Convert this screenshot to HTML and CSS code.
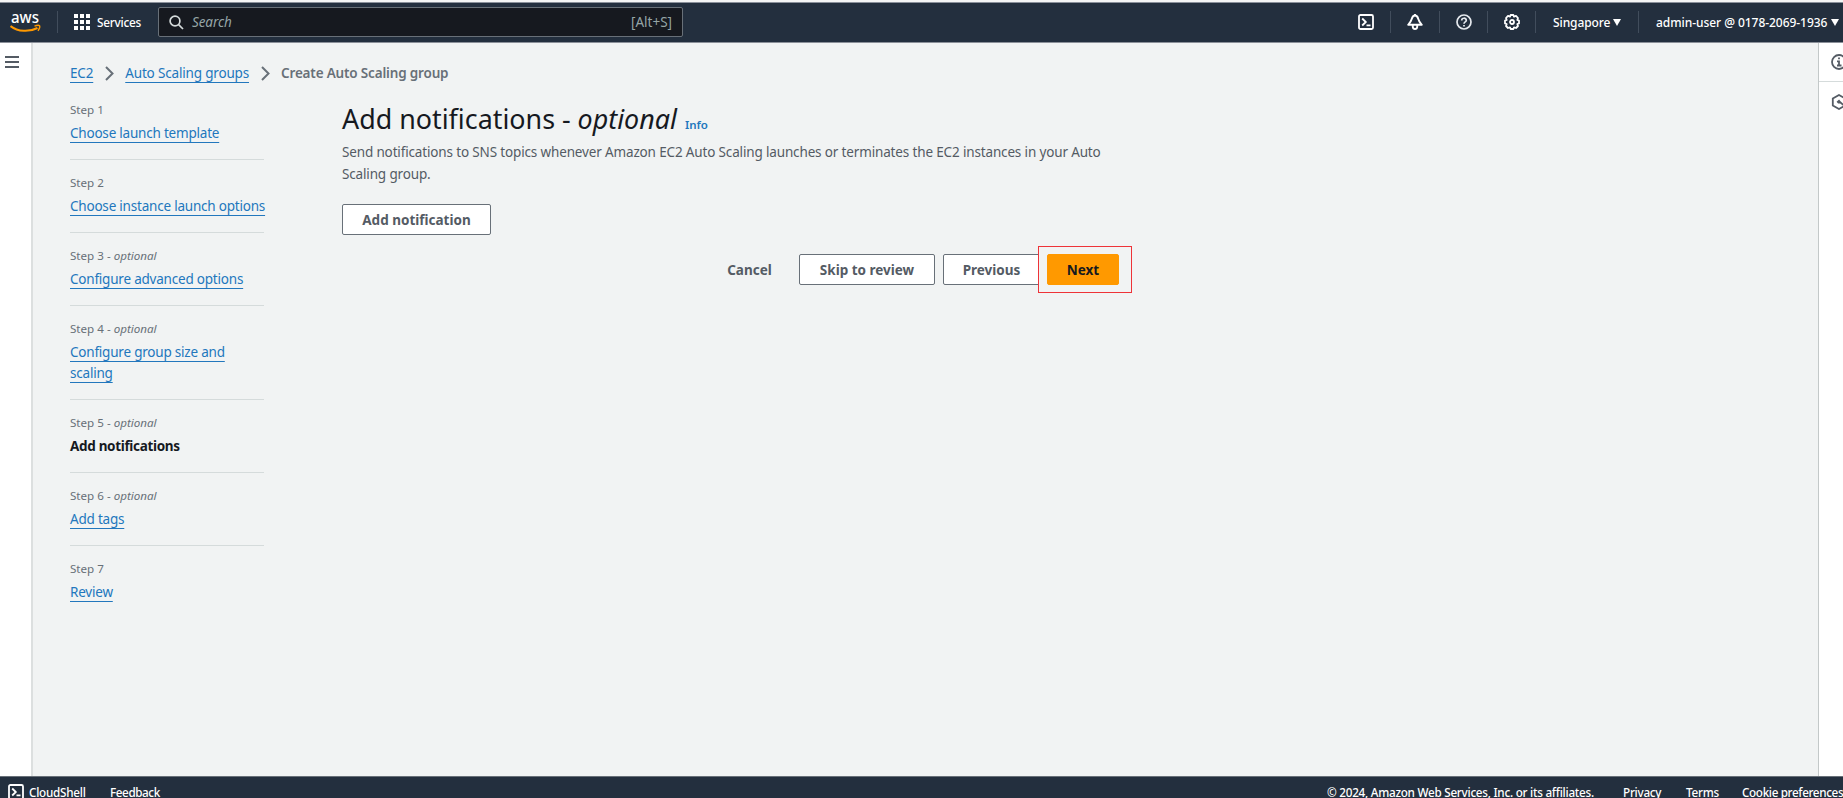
FILE: index.html
```html
<!DOCTYPE html>
<html lang="en">
<head>
<meta charset="utf-8">
<title>Create Auto Scaling group | EC2</title>
<link rel="stylesheet" href="styles.css">
</head>
<body>
<header class="topbar">
  <svg class="logo" width="32" height="32" viewBox="0 -8 32 32" aria-label="aws">
    <text class="logo-text" x="1" y="9" textLength="28" lengthAdjust="spacingAndGlyphs">aws</text>
    <path d="M0.500 12C8 18 19.500 18.200 27.500 14" fill="none" stroke="#f90" stroke-width="2"/>
    <path d="M24.500 12.100C27 11.200 29 11.200 29.600 11.800C30 12.700 29.300 15 28 16.800" fill="none" stroke="#f90" stroke-width="1.400"/>
  </svg>
  <span class="rule rule-logo"></span>
  <div class="services">
    <svg width="16" height="16" viewBox="0 0 16 16" fill="#fff"><path d="M0 0h4v4H0zM6 0h4v4H6zM12 0h4v4h-4zM0 6h4v4H0zM6 6h4v4H6zM12 6h4v4h-4zM0 12h4v4H0zM6 12h4v4H6zM12 12h4v4h-4z"/></svg>
    <span class="t-services">Services</span>
  </div>
  <div class="search">
    <svg width="15" height="15" viewBox="0 0 15 15" fill="none" stroke="#d5dbdb" stroke-width="1.700"><circle cx="6" cy="6" r="4.900"/><path d="M9.600 9.600L14 14"/></svg>
    <span class="search-hint">Search</span>
    <span class="search-key">[Alt+S]</span>
  </div>
  <nav class="tools">
    <span class="tool tool-shell"><svg width="16" height="16" viewBox="0 0 16 16" fill="none" stroke="#fff" stroke-width="1.800"><rect x="1" y="1" width="14" height="14" rx="1.500"/><path d="M4.200 4.500L7.800 8L4.200 11.500M8.500 11.300H12.500"/></svg></span>
    <span class="tool tool-bell"><svg width="16" height="16" viewBox="0 0 16 16" fill="none" stroke="#fff" stroke-width="1.900" stroke-linejoin="round"><path d="M8 1.500C6 1.500 5.200 3 4.700 5C4.100 7.300 3 8.500 1.200 10.800H14.800C13 8.500 11.900 7.300 11.300 5C10.800 3 10 1.500 8 1.500ZM5.800 11V13Q6 15 8 15T10.200 13V11M8 0V2"/></svg></span>
    <span class="tool tool-help"><svg width="16" height="16" viewBox="0 0 16 16" fill="none" stroke="#e5e9ee" stroke-width="1.700"><circle cx="8" cy="8" r="7"/><path d="M5.700 6.500C5.700 3.500 10.300 3.500 10.300 6.300C10.300 8 8 7.700 8 9.800M8 11V12.600"/></svg></span>
    <span class="tool tool-gear"><svg width="16" height="16" viewBox="0 0 16 16" fill="none" stroke="#fff" stroke-width="1.800" stroke-linejoin="round"><path d="M6.600 1H9.400L10 2.600L12 1.900L14 4L13.300 6L15 6.600V9.400L13.300 10L14 12L12 14L10 13.400L9.400 15H6.600L6 13.400L4 14L2 12L2.700 10L1 9.400V6.600L2.700 6L2 4L4 1.900L6 2.600Z"/><circle cx="8" cy="8" r="2"/></svg></span>
    <span class="region"><span class="t-region">Singapore</span><svg width="8" height="7" viewBox="0 0 8 7" fill="#fff"><path d="M0 0H8L4 7Z"/></svg></span>
    <span class="account"><span class="t-account">admin-user @ 0178-2069-1936</span><svg width="8" height="7" viewBox="0 0 8 7" fill="#fff"><path d="M0 0H8L4 7Z"/></svg></span>
  </nav>
</header>

<div class="shell">
  <aside class="left-rail">
    <svg width="14" height="12" viewBox="0 0 14 12" stroke="#545b64" stroke-width="1.800"><path d="M0 1H14M0 6H14M0 11H14"/></svg>
  </aside>
  <main class="page">
    <nav class="crumbs">
      <a class="link c-ec2">EC2</a>
      <svg class="chev" width="9" height="15" viewBox="0 0 9 15" fill="none" stroke="#687078" stroke-width="2"><path d="M1 1L7.500 7.500L1 14"/></svg>
      <a class="link c-asg">Auto Scaling groups</a>
      <svg class="chev" width="9" height="15" viewBox="0 0 9 15" fill="none" stroke="#687078" stroke-width="2"><path d="M1 1L7.500 7.500L1 14"/></svg>
      <span class="c-current">Create Auto Scaling group</span>
    </nav>
    <div class="columns">
      <ol class="steps">
        <li><div class="step-no">Step 1</div><div class="step-name"><a class="link">Choose launch template</a></div></li>
        <li><div class="step-no">Step 2</div><div class="step-name"><a class="link">Choose instance launch options</a></div></li>
        <li><div class="step-no">Step 3 - <i>optional</i></div><div class="step-name"><a class="link">Configure advanced options</a></div></li>
        <li><div class="step-no">Step 4 - <i>optional</i></div><div class="step-name"><a class="link">Configure group size and<br>scaling</a></div></li>
        <li><div class="step-no">Step 5 - <i>optional</i></div><div class="step-name active">Add notifications</div></li>
        <li><div class="step-no">Step 6 - <i>optional</i></div><div class="step-name"><a class="link">Add tags</a></div></li>
        <li><div class="step-no">Step 7</div><div class="step-name"><a class="link">Review</a></div></li>
      </ol>
      <section class="content">
        <div class="heading"><h1>Add notifications - <i>optional</i></h1><a class="info">Info</a></div>
        <p class="desc">Send notifications to SNS topics whenever Amazon EC2 Auto Scaling launches or terminates the EC2 instances in your Auto<br>Scaling group.</p>
        <button class="btn b-add">Add notification</button>
        <div class="actions">
          <button class="btn b-cancel">Cancel</button>
          <button class="btn b-skip">Skip to review</button>
          <button class="btn b-prev">Previous</button>
          <div class="next-wrap"><button class="btn b-next">Next</button></div>
        </div>
      </section>
    </div>
  </main>
  <aside class="right-rail">
    <div class="rail-item"><svg width="16" height="16" viewBox="0 0 16 16" fill="none" stroke="#545b64" stroke-width="1.800"><circle cx="8" cy="8" r="7"/><path d="M8 3.500V5.300M6 7.300H8V11.500M6 11.500H10.500"/></svg></div>
    <div class="rail-item last"><svg width="16" height="16" viewBox="0 0 16 16" fill="none" stroke="#545b64" stroke-width="1.800"><path d="M8 1L14.200 4.500V11.500L8 15L1.800 11.500V4.500Z"/><path d="M6.200 8.500L8 6.800L9.500 8.500L13 11.500M7 8.500H9"/></svg></div>
  </aside>
</div>

<footer class="footer">
  <svg width="16" height="16" viewBox="0 0 16 16" fill="none" stroke="#fff" stroke-width="1.800"><rect x="1" y="1" width="14" height="14" rx="1.500"/><path d="M4.200 4.500L7.800 8L4.200 11.500M8.500 11.300H12.500"/></svg>
  <span class="f-shell">CloudShell</span>
  <span class="f-feedback">Feedback</span>
  <span class="f-copy">© 2024, Amazon Web Services, Inc. or its affiliates.</span>
  <span class="f-privacy">Privacy</span>
  <span class="f-terms">Terms</span>
  <span class="f-cookie">Cookie preferences</span>
</footer>
</body>
</html>
```
FILE: styles.css
```css
* { box-sizing: border-box; }
body {
  margin: 0;
  height: 798px;
  overflow: hidden;
  display: flex;
  flex-direction: column;
  background: #f1f3f3;
  font-family: "Noto Sans", "Open Sans", sans-serif;
  font-size: 13.5px;
  color: #545b64;
  white-space: nowrap;
}
svg { display: block; flex: none; }
span, a { flex: none; }

.topbar {
  height: 43px;
  flex: none;
  display: flex;
  align-items: center;
  border-top: 2px solid #f4f5f5;
  border-bottom: 1px solid #8b9099;
  background: #232f3e;
  box-shadow: inset 0 1px #8b919b;
  color: #fff;
  font-size: 12px;
  font-weight: 500;
}
.logo { margin-left: 10px; }
.logo-text { font-family: "Noto Sans", sans-serif; font-size: 17px; font-weight: 500; fill: #fff; }
.rule { width: 1px; height: 22px; background: #414d5c; }
.rule-logo { margin-left: 15px; }
.services { display: flex; align-items: center; margin-left: 16px; width: 84px; gap: 7px; }
.t-services { font-size: 11.8px; letter-spacing: -0.25px; }
.search {
  display: flex;
  align-items: center;
  width: 525px;
  height: 30px;
  padding: 0 10px;
  border: 1px solid #687078;
  border-radius: 2px;
  background: #16191f;
  color: #95a5a6;
  font-size: 13.5px;
  font-weight: 400;
}
.search-hint { margin-left: 8px; font-style: italic; letter-spacing: -0.1px; }
.search-key { margin-left: auto; }
.tools { display: flex; align-items: center; margin-left: auto; }
.tool { display: flex; align-items: center; height: 22px; border-right: 1px solid #414d5c; }
.tool-shell { width: 33px; }
.tool-bell { width: 49px; padding-left: 16px; }
.tool-help { width: 48px; padding-left: 16px; }
.tool-gear { width: 48px; padding-left: 16px; }
.region { display: flex; align-items: center; gap: 6px; width: 103px; height: 22px; padding-left: 17px; border-right: 1px solid #414d5c; }
.t-region { width: 54px; letter-spacing: -0.1px; }
.account { display: flex; align-items: center; gap: 6px; width: 204px; padding-left: 17px; }
.t-account { width: 169px; letter-spacing: -0.05px; }

.shell { display: flex; flex: 1; min-height: 0; }
.left-rail { width: 33px; padding: 13px 0 0 5px; background: #fff; border-right: 2px solid #dcdfdf; }
.page { flex: 1; min-width: 0; padding: 18px 0 0 37px; }
.right-rail { width: 25px; overflow: hidden; background: #fff; border-left: 1px solid #c3c8c8; }
.rail-item { height: 39px; padding: 11px 0 0 12px; border-bottom: 1px solid #d5dbdb; }
.rail-item.last { border-bottom: 0; padding-top: 12px; }

.link { color: #2277bd; text-decoration: underline; text-decoration-thickness: 1px; text-underline-offset: 4px; text-decoration-skip-ink: none; }
.crumbs { display: flex; align-items: center; height: 24px; letter-spacing: -0.17px; }
.chev { margin: 0 11.500px; }
.c-current { font-weight: 600; color: #687078; }

.columns { display: flex; align-items: flex-start; padding-top: 14px; }
.steps { width: 194px; margin: 0; padding: 0; list-style: none; }
.steps li { padding-bottom: 15px; border-bottom: 1px solid #d5dbdb; }
.steps li + li { padding-top: 12px; }
.steps li:last-child { border-bottom: 0; }
.step-no { height: 24px; line-height: 21px; font-size: 11.6px; color: #687078; }
.step-name { line-height: 21px; letter-spacing: -0.21px; }
.step-name.active { font-weight: 700; letter-spacing: -0.32px; color: #16191f; }

.content { width: 790px; margin-left: 78px; }
.heading { display: flex; align-items: baseline; height: 43px; padding-top: 2px; }
h1 { margin: 0; font-size: 26.85px; line-height: 36px; font-weight: 400; color: #16191f; }
.info { margin-left: 8px; font-size: 11.5px; font-weight: 600; color: #2277bd; }
.desc { margin: 0 0 19px; line-height: 21.500px; letter-spacing: -0.15px; }
.btn {
  display: block;
  height: 31px;
  margin: 0;
  padding: 0;
  border: 1px solid #687078;
  border-radius: 2px;
  background: #fff;
  color: #545b64;
  font: 700 13.5px "Noto Sans", sans-serif;
}
.b-add { width: 149px; }
.actions { display: flex; align-items: center; height: 47px; margin-top: 11px; padding-left: 366px; }
.b-cancel { width: 83px; border-color: transparent; background: transparent; }
.b-skip { width: 136px; margin-left: 8px; }
.b-prev { width: 97px; margin-left: 8px; }
.next-wrap { position: relative; width: 94px; height: 47px; margin-left: -2px; padding: 7px 0 0 8px; border: 1px solid #ee3338; background: #f1f3f3; }
.b-next { width: 72px; border-color: #f90; background: #f90; color: #16191f; }

.footer { display: flex; align-items: center; flex: none; height: 22px; padding: 8px 0 0 8px; border-top: 1px solid #687078; background: #232f3e; color: #fff; font-size: 11.7px; font-weight: 500; letter-spacing: -0.25px; }
.f-shell { margin-left: 5px; width: 57px; }
.f-feedback { margin-left: 24px; letter-spacing: -0.4px; }
.f-copy { margin-left: auto; width: 267px; }
.f-privacy { margin-left: 29px; width: 39px; }
.f-terms { margin-left: 24px; width: 31px; }
.f-cookie { margin-left: 25px; width: 101px; letter-spacing: -0.35px; }
```
